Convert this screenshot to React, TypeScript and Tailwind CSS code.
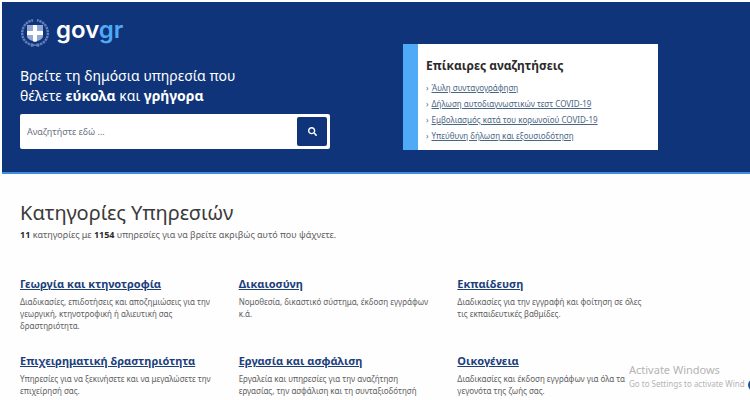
import { FaSearch } from "react-icons/fa";

const TRENDING = [
  "Άυλη συνταγογράφηση",
  "Δήλωση αυτοδιαγνωστικών τεστ COVID-19",
  "Εμβολιασμός κατά του κορωνοϊού COVID-19",
  "Υπεύθυνη δήλωση και εξουσιοδότηση",
];

const CATEGORIES: Array<{ title: string; description: string }> = [
  {
    title: "Γεωργία και κτηνοτροφία",
    description:
      "Διαδικασίες, επιδοτήσεις και αποζημιώσεις για την γεωργική, κτηνοτροφική ή αλιευτική σας δραστηριότητα.",
  },
  {
    title: "Δικαιοσύνη",
    description: "Νομοθεσία, δικαστικό σύστημα, έκδοση εγγράφων κ.ά.",
  },
  {
    title: "Εκπαίδευση",
    description:
      "Διαδικασίες για την εγγραφή και φοίτηση σε όλες τις εκπαιδευτικές βαθμίδες.",
  },
  {
    title: "Επιχειρηματική δραστηριότητα",
    description:
      "Υπηρεσίες για να ξεκινήσετε και να μεγαλώσετε την επιχείρησή σας.",
  },
  {
    title: "Εργασία και ασφάλιση",
    description:
      "Εργαλεία και υπηρεσίες για την αναζήτηση εργασίας, την ασφάλιση και τη συνταξιοδότησή",
  },
  {
    title: "Οικογένεια",
    description: "Διαδικασίες και έκδοση εγγράφων για όλα τα γεγονότα της ζωής σας.",
  },
];

function Emblem() {
  return (
    <svg viewBox="0 0 30 30" className="size-[30px]" aria-hidden="true">
      {/* laurel wreath */}
      <g fill="none" stroke="#6380bb">
        <path
          d="M13 27C6.5 26.3 2.2 21.3 2.2 15C2.2 9.3 6 3.5 13 2.2"
          strokeWidth="2.4"
          strokeDasharray="2.4 0.7"
        />
        <path
          d="M17 27C23.5 26.3 27.8 21.3 27.8 15C27.8 9.3 24 3.5 17 2.2"
          strokeWidth="2.4"
          strokeDasharray="2.4 0.7"
        />
        <path d="M11 28.5L18.5 26M19 28.5L11.5 26" strokeWidth="1.2" />
      </g>
      {/* shield with cross */}
      <path
        d="M7 7H23V18C23 21 19.5 22.600 15 23.8C10.5 22.600 7 21 7 18Z"
        fill="#93a8d3"
      />
      <path
        d="M13 7H17V13H23V17H17V23.2L15 23.8L13 23.2V17H7V13H13Z"
        fill="#ffffff"
      />
    </svg>
  );
}

function Hero() {
  return (
    <header className="border-b-2 border-[#3f8de0] bg-[#0f3479] px-[18px] pt-4 pb-[22px]">
      <div className="flex max-w-[638px] justify-between gap-4">
        <div className="w-[310px]">
          <a href="#" aria-label="govgr" className="flex items-start gap-[6px]">
            <Emblem />
            <span className="font-[Inter,sans-serif] text-[24px] leading-6 font-semibold text-white">
              gov<span className="text-[#4fa9f7]">gr</span>
            </span>
          </a>
          <h1 className="mt-[18px] text-[14px] leading-5 text-white">
            Βρείτε τη δημόσια υπηρεσία που
            <br />
            θέλετε <strong>εύκολα</strong> και <strong>γρήγορα</strong>
          </h1>
          <form className="mt-2 flex h-[35px] rounded-xs bg-white p-[3px]">
            <input
              type="search"
              aria-label="Αναζήτηση"
              placeholder="Αναζητήστε εδώ ..."
              className="min-w-0 flex-1 px-1 text-[9px] text-gray-700 outline-none placeholder:text-gray-500"
            />
            <button
              type="button"
              aria-label="Αναζήτηση"
              className="flex w-[30px] items-center justify-center rounded-xs bg-[#0f3479] text-white"
            >
              <FaSearch className="size-[9px]" />
            </button>
          </form>
        </div>
        <section className="mt-[26px] w-[255px] self-start border-l-[15px] border-[#4fabf5] bg-white px-2 pt-3 pb-[6px]">
          <h2 className="text-[12px] leading-5 font-bold text-[#2b2b2b]">
            Επίκαιρες αναζητήσεις
          </h2>
          <ul className="mt-1">
            {TRENDING.map((label) => (
              <li key={label} className="flex gap-[3px] text-[8px] leading-4 text-[#4a6684]">
                <span aria-hidden="true">›</span>
                <a href="#" className="underline">
                  {label}
                </a>
              </li>
            ))}
          </ul>
        </section>
      </div>
    </header>
  );
}

export default function App() {
  return (
    <div className="relative h-screen overflow-hidden bg-[#fefefe] pt-[2px] pl-[2px] font-['Noto_Sans',sans-serif]">
      <Hero />
      <main className="px-[18px] pt-[25px]">
        <h2 className="text-[20px] leading-7 text-[#3a3a3a]">Κατηγορίες Υπηρεσιών</h2>
        <p className="text-[9px] leading-4 text-[#606060]">
          <strong className="text-[#2b2b2b]">11</strong> κατηγορίες με{" "}
          <strong className="text-[#2b2b2b]">1154</strong> υπηρεσίες για να βρείτε
          ακριβώς αυτό που ψάχνετε.
        </p>
        <div className="mt-[31px] grid max-w-[636px] grid-cols-3 gap-x-5 gap-y-[19px]">
          {CATEGORIES.map((category) => (
            <article key={category.title}>
              <h3 className="text-[11px] leading-5 font-bold">
                <a href="#" className="text-[#1c3f7c] underline">
                  {category.title}
                </a>
              </h3>
              <p className="mt-[2px] pr-1 text-[8px] leading-3 text-[#606060]">
                {category.description}
              </p>
            </article>
          ))}
        </div>
      </main>
      {/* system watermark over the page */}
      <div className="pointer-events-none absolute top-[362px] left-[629px] whitespace-nowrap text-[#b4b4b4]">
        <p className="text-[11px] leading-4">Activate Windows</p>
        <p className="text-[8px] leading-3">Go to Settings to activate Wind</p>
      </div>
      <div className="absolute top-[379px] -right-[10px] size-3 rounded-full bg-[#1c4f94]" />
    </div>
  );
}
